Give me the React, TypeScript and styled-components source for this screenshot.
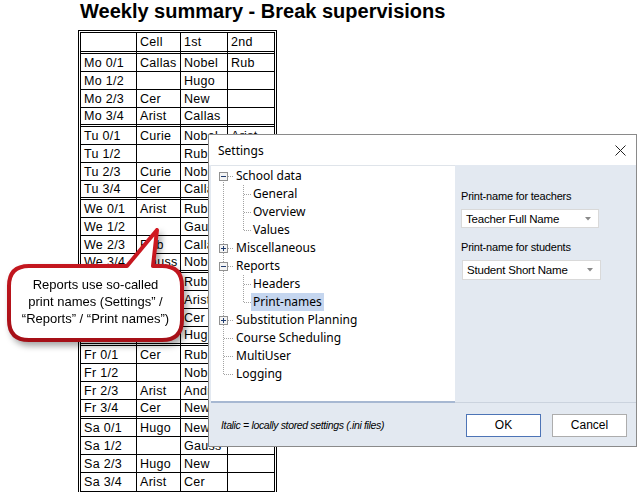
import React from 'react';
import styled, { createGlobalStyle } from 'styled-components';

const GlobalStyle = createGlobalStyle`
  html, body { margin: 0; padding: 0; background: #fff; }
  body { font-family: "Liberation Sans", Arial, sans-serif; color: #000; }
`;

const Page = styled.div`
  position: relative;
  width: 637px;
  height: 492px;
  overflow: hidden;
  padding-left: 78px;
  box-sizing: border-box;
`;

const Title = styled.h1`
  margin: 0 0 8px 2px;
  padding-top: 1px;
  font: bold 20px/21px "Liberation Sans", Arial, sans-serif;
`;

const Sheet = styled.div`
  display: grid;
  grid-template-columns: 56px 44px 47px 46px;
  width: max-content;
  border: 3px double #000;
  font: 12.5px "Liberation Sans", Arial, sans-serif;
`;

type Kind = 'head' | 'row' | 'end' | 'last';

const Cell = styled.div<{ $kind: Kind; $lastCol?: boolean }>`
  box-sizing: border-box;
  height: ${p => (p.$kind === 'head' ? 21 : p.$kind === 'end' ? 19 : 18)}px;
  border-right: ${p => (p.$lastCol ? 'none' : '1px solid #000')};
  border-bottom: ${p =>
    p.$kind === 'row' ? '1px solid #000' : p.$kind === 'last' ? 'none' : '3px double #000'};
  padding-left: 3px;
  display: flex;
  align-items: center;
  white-space: nowrap;
  overflow: hidden;
  letter-spacing: 0.3px;
`;

const Dialog = styled.div`
  position: absolute;
  left: 208px;
  top: 134px;
  width: 429px;
  height: 313px;
  box-sizing: border-box;
  border: 1px solid #8a8a8a;
  background: #e3e9f1;
  display: flex;
  flex-direction: column;
  font-family: "Noto Sans", "Open Sans", sans-serif;
`;

const TitleBar = styled.div`
  height: 30px;
  background: #fff;
  display: flex;
  align-items: center;
  justify-content: space-between;
  padding: 0 10px 0 9px;
  font-size: 12px;
`;

const Body = styled.div`
  display: flex;
  height: 238px;
`;

const TreePanel = styled.div`
  width: 244px;
  margin-left: 2px;
  background: #fff;
  border-top: 1px solid #dfe4ea;
  border-bottom: 2px solid #a7b8d2;
  box-sizing: border-box;
  padding-top: 1px;
  font-size: 12px;
`;

const TreeRow = styled.div`
  height: 18px;
  display: flex;
  align-items: center;
`;

const TreeLabel = styled.span<{ $selected?: boolean }>`
  height: 18px;
  line-height: 18px;
  padding: 0 2px;
  white-space: nowrap;
  background: ${p => (p.$selected ? '#c5d6ef' : 'transparent')};
`;

const SidePanel = styled.div`
  flex: 1;
  padding: 24px 0 0 6px;
  border-bottom: 1px solid #cbd3de;
  box-sizing: border-box;
  font-family: "Liberation Sans", Arial, sans-serif;
`;

const FieldLabel = styled.div<{ $gap: number }>`
  margin-top: ${p => p.$gap}px;
  font-size: 11px;
  line-height: 14px;
  letter-spacing: -0.2px;
`;

const Combo = styled.div<{ $w: number; $h: number; $shift: number }>`
  margin: 6px 0 0 ${p => p.$shift}px;
  width: ${p => p.$w}px;
  height: ${p => p.$h}px;
  box-sizing: border-box;
  border: 1px solid #d9d9d9;
  background: #fff;
  display: flex;
  align-items: center;
  justify-content: space-between;
  padding: 0 7px 0 4px;
  font-size: 11.5px;
  letter-spacing: -0.2px;
`;

const Footer = styled.div`
  flex: 1;
  display: flex;
  align-items: center;
  padding: 1px 9px 0 12px;
`;

const Note = styled.div`
  flex: 1;
  font: italic 10.5px "Liberation Sans", Arial, sans-serif;
  letter-spacing: -0.35px;
`;

const Button = styled.button<{ $primary?: boolean }>`
  width: 75px;
  height: 23px;
  margin-left: 11px;
  background: #fff;
  border: 1px solid ${p => (p.$primary ? '#4d74b6' : '#adadad')};
  font: 12px "Liberation Sans", Arial, sans-serif;
  color: #000;
  padding: 0;
`;

const Callout = styled.div`
  position: absolute;
  left: 7px;
  top: 226px;
  width: 182px;
  height: 122px;
  filter: drop-shadow(3px 4px 3px rgba(0, 0, 0, 0.35));
`;

const CalloutText = styled.div`
  position: absolute;
  left: 2px;
  top: 50px;
  width: 173px;
  text-align: center;
  font: 13px/17px "Liberation Sans", Arial, sans-serif;
`;

type Node = {
  label: string;
  level: 0 | 1;
  expander?: 'plus' | 'minus';
  first?: boolean;
  last?: boolean;
  selected?: boolean;
};

const tree: Node[] = [
  { label: 'School data', level: 0, expander: 'minus', first: true },
  { label: 'General', level: 1 },
  { label: 'Overview', level: 1 },
  { label: 'Values', level: 1, last: true },
  { label: 'Miscellaneous', level: 0, expander: 'plus' },
  { label: 'Reports', level: 0, expander: 'minus' },
  { label: 'Headers', level: 1 },
  { label: 'Print-names', level: 1, last: true, selected: true },
  { label: 'Substitution Planning', level: 0, expander: 'plus' },
  { label: 'Course Scheduling', level: 0 },
  { label: 'MultiUser', level: 0 },
  { label: 'Logging', level: 0, last: true },
];

const Guide: React.FC<{ node: Node }> = ({ node }) => {
  const dot = { stroke: '#a3a3a3', strokeWidth: 1, strokeDasharray: '1 1' };
  if (node.level === 1) {
    return (
      <svg width={40} height={18}>
        <line x1={12.5} y1={0} x2={12.5} y2={18} {...dot} />
        <line x1={32.5} y1={0} x2={32.5} y2={node.last ? 9.5 : 18} {...dot} />
        <line x1={33} y1={9.5} x2={40} y2={9.5} {...dot} />
      </svg>
    );
  }
  return (
    <svg width={23} height={18}>
      <line x1={12.5} y1={node.first ? 9 : 0} x2={12.5} y2={node.last ? 9.5 : 18} {...dot} />
      <line x1={13} y1={9.5} x2={23} y2={9.5} {...dot} />
      {node.expander && (
        <g>
          <rect x={8.5} y={5.5} width={8} height={8} fill="#f4f4f4" stroke="#919191" />
          <line x1={10} y1={9.5} x2={15} y2={9.5} stroke="#1f3b6e" />
          {node.expander === 'plus' && <line x1={12.5} y1={7} x2={12.5} y2={12} stroke="#1f3b6e" />}
        </g>
      )}
    </svg>
  );
};

const Arrow = () => (
  <svg width={6} height={4}>
    <path d="M0 0 L6 0 L3 3.5 Z" fill="#8a8a8a" />
  </svg>
);

// the Th rows sit under the callout, only the 1st column shows
const days = [
  ['Mo', [['Callas', 'Nobel', 'Rub'], ['', 'Hugo', ''], ['Cer', 'New', ''], ['Arist', 'Callas', '']]],
  ['Tu', [['Curie', 'Nobel', 'Arist'], ['', 'Rub', ''], ['Curie', 'Nobel', ''], ['Cer', 'Callas', '']]],
  ['We', [['Arist', 'Rub', ''], ['', 'Gauss', ''], ['Rub', 'Callas', ''], ['Gauss', 'Nobel', '']]],
  ['Th', [['', 'Rub', ''], ['', 'Arist', ''], ['', 'Cer', ''], ['', 'Hugo', '']]],
  ['Fr', [['Cer', 'Rub', ''], ['', 'Nobel', ''], ['Arist', 'Andr', ''], ['Cer', 'New', '']]],
  ['Sa', [['Hugo', 'New', ''], ['', 'Gauss', ''], ['Hugo', 'New', ''], ['Arist', 'Cer', '']]],
] as [string, string[][]][];

const slots = ['0/1', '1/2', '2/3', '3/4'];

export default function App() {
  return (
    <Page>
      <GlobalStyle />
      <Title>Weekly summary - Break supervisions</Title>
      <Sheet>
        {['', 'Cell', '1st', '2nd'].map((h, i) => (
          <Cell key={'h' + i} $kind="head" $lastCol={i === 3}>{h}</Cell>
        ))}
        {days.map(([day, rows], d) =>
          rows.map((vals, r) => {
            const kind: Kind = r < 3 ? 'row' : d === days.length - 1 ? 'last' : 'end';
            const label = day === 'Th' ? '' : `${day} ${slots[r]}`;
            return [label, ...vals].map((v, i) => (
              <Cell key={`${day}${r}${i}`} $kind={kind} $lastCol={i === 3}>{v}</Cell>
            ));
          })
        )}
      </Sheet>

      <Callout>
        <svg width={182} height={122}>
          <defs>
            <linearGradient id="rim" x1="0" y1="0" x2="0" y2="1">
              <stop offset="0" stopColor="#d21a22" />
              <stop offset="1" stopColor="#a50f17" />
            </linearGradient>
          </defs>
          <path
            d="M22 40 H120 L150 4 L146 40 H155 Q175 40 175 60 V94 Q175 114 155 114 H22 Q2 114 2 94 V60 Q2 40 22 40 Z"
            fill="#fff"
            stroke="url(#rim)"
            strokeWidth={4}
            strokeLinejoin="round"
          />
        </svg>
        <CalloutText>
          Reports use so-called
          <br />
          print names (Settings” /
          <br />
          “Reports” / “Print names”)
        </CalloutText>
      </Callout>

      <Dialog>
        <TitleBar>
          <span>Settings</span>
          <svg width={11} height={11}>
            <path d="M0.5 0.5 L10.5 10.5 M10.5 0.5 L0.5 10.5" stroke="#222" strokeWidth={1} />
          </svg>
        </TitleBar>
        <Body>
          <TreePanel>
            {tree.map(n => (
              <TreeRow key={n.label}>
                <Guide node={n} />
                <TreeLabel $selected={n.selected}>{n.label}</TreeLabel>
              </TreeRow>
            ))}
          </TreePanel>
          <SidePanel>
            <FieldLabel $gap={0}>Print-name for teachers</FieldLabel>
            <Combo $w={138} $h={19} $shift={0}>
              <span>Teacher Full Name</span>
              <Arrow />
            </Combo>
            <FieldLabel $gap={12}>Print-name for students</FieldLabel>
            <Combo $w={139} $h={20} $shift={1}>
              <span>Student Short Name</span>
              <Arrow />
            </Combo>
          </SidePanel>
        </Body>
        <Footer>
          <Note>Italic = locally stored settings (.ini files)</Note>
          <Button $primary>OK</Button>
          <Button>Cancel</Button>
        </Footer>
      </Dialog>
    </Page>
  );
}
